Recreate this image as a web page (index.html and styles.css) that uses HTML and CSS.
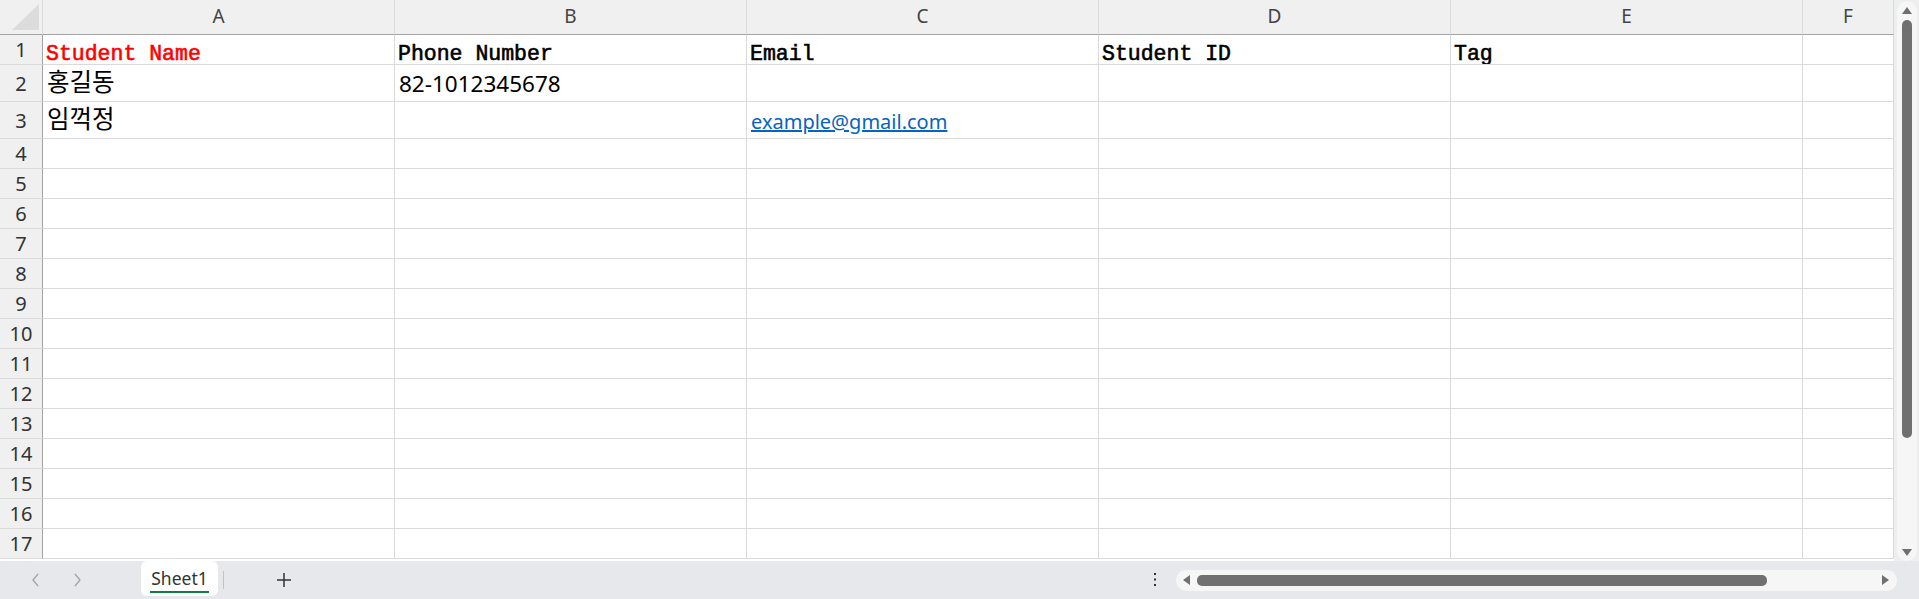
FILE: index.html
```html
<!DOCTYPE html>
<html lang="ko">
<head>
  <meta charset="UTF-8" />
  <title>Sheet1</title>
  <link rel="stylesheet" href="styles.css">
</head>
<body>
<div class="app">
  <div class="sheet">
    <div class="grid" id="grid">
      <div class="corner">
        <svg width="43" height="35" viewBox="0 0 43 35"><polygon points="12,30 39,4 39,30" fill="#dcdcdc"/></svg>
      </div>
      <div class="col-head">A</div>
      <div class="col-head">B</div>
      <div class="col-head">C</div>
      <div class="col-head">D</div>
      <div class="col-head">E</div>
      <div class="col-head">F</div>

      <div class="row-head">1</div>
      <div class="cell title red">Student Name</div>
      <div class="cell title">Phone Number</div>
      <div class="cell title">Email</div>
      <div class="cell title">Student ID</div>
      <div class="cell title">Tag</div>
      <div class="cell"></div>

      <div class="row-head">2</div>
      <div class="cell text ko">홍길동</div>
      <div class="cell text">82-1012345678</div>
      <div class="cell"></div>
      <div class="cell"></div>
      <div class="cell"></div>
      <div class="cell"></div>

      <div class="row-head">3</div>
      <div class="cell text ko">임꺽정</div>
      <div class="cell"></div>
      <div class="cell text"><a class="link" href="mailto:example@gmail.com">example@gmail.com</a></div>
      <div class="cell"></div>
      <div class="cell"></div>
      <div class="cell"></div>
    </div>

    <div class="vscroll">
      <div class="vtrack">
        <span class="arrow up"></span>
        <span class="vthumb"></span>
        <span class="arrow down"></span>
      </div>
    </div>
  </div>

  <div class="tabbar">
    <div class="nav">
      <svg width="10" height="14" viewBox="0 0 10 14"><path d="M7 1 L2 7 L7 13" fill="none" stroke="#a3a3a3" stroke-width="1.3"/></svg>
      <svg width="10" height="14" viewBox="0 0 10 14"><path d="M3 1 L8 7 L3 13" fill="none" stroke="#a3a3a3" stroke-width="1.3"/></svg>
    </div>
    <div class="tab"><span class="label">Sheet1</span></div>
    <span class="sep"></span>
    <svg class="add" width="14" height="14" viewBox="0 0 14 14"><path d="M7 0 V14 M0 7 H14" stroke="#333" stroke-width="1.5"/></svg>
    <div class="spacer"></div>
    <svg class="more" width="4" height="16" viewBox="0 0 4 16"><rect x="1" y="1" width="2" height="2" fill="#333"/><rect x="1" y="6.5" width="2" height="2" fill="#333"/><rect x="1" y="12" width="2" height="2" fill="#333"/></svg>
    <div class="htrack">
      <span class="arrow left"></span>
      <span class="hthumb"></span>
      <span class="arrow right"></span>
    </div>
  </div>
</div>

<script>
  // empty rows 4..17
  const grid = document.getElementById("grid");
  for (let r = 4; r <= 17; r++) {
    const head = document.createElement("div");
    head.className = "row-head";
    head.textContent = r;
    grid.appendChild(head);
    for (let c = 0; c < 6; c++) {
      const cell = document.createElement("div");
      cell.className = "cell";
      grid.appendChild(cell);
    }
  }
</script>
</body>
</html>
```

FILE: styles.css
```css
html, body {
  margin: 0;
  padding: 0;
  overflow: hidden;
}
body {
  font-family: "Noto Sans", "Noto Sans CJK KR", sans-serif;
  background: #e6e8eb;
}
.app {
  width: 1919px;
  height: 599px;
  display: flex;
  flex-direction: column;
}
.sheet {
  display: flex;
  height: 561px;
}
.grid {
  flex: 1;
  display: grid;
  grid-template-columns: 43px repeat(5, 352px) 1fr;
  grid-template-rows: 35px 30px 37px 37px repeat(14, 30px);
  background: #fff;
  overflow: hidden;
}
.grid > div {
  box-sizing: border-box;
  min-width: 0;
}
.corner {
  background: #f0f0f0;
  border-right: 1px solid #dadada;
  border-bottom: 1px solid #a3a3a3;
}
.corner svg {
  display: block;
}
.col-head {
  background: #f0f0f0;
  border-right: 1px solid #dadada;
  border-bottom: 1px solid #a3a3a3;
  color: #444;
  font-size: 19px;
  line-height: 1;
  display: flex;
  align-items: center;
  justify-content: center;
  padding-bottom: 2px;
}
.row-head {
  background: #f0f0f0;
  border-right: 1px solid #a3a3a3;
  border-bottom: 1px solid #dadada;
  color: #333;
  font-size: 20px;
  line-height: 1;
  display: flex;
  align-items: center;
  justify-content: center;
  padding-top: 1px;
}
.cell {
  border-right: 1px solid #dadada;
  border-bottom: 1px solid #dadada;
  padding: 0 4px;
  display: flex;
  align-items: flex-end;
  white-space: nowrap;
  overflow: hidden;
}
.title {
  font-family: "Liberation Mono", monospace;
  font-size: 21.5px;
  line-height: 20px;
  padding-left: 3px;
  color: #000;
  -webkit-text-stroke: 0.6px currentColor;
}
.red {
  color: #ff0000;
}
.text {
  font-size: 22.5px;
  line-height: 1;
  padding-bottom: 6px;
  color: #000;
}
.ko {
  font-size: 24.5px;
  padding-bottom: 7px;
}
.link {
  font-size: 20px;
  color: #0563c1;
  text-decoration: underline;
}

/* vertical scrollbar */
.vscroll {
  width: 25px;
  background: #eceef0;
  padding: 1px 2px 0 3px;
  box-sizing: border-box;
}
.vtrack {
  height: 560px;
  background: #f6f6f6;
  border-radius: 10px;
  display: flex;
  flex-direction: column;
  align-items: center;
  padding: 6px 0 5px;
  box-sizing: border-box;
}
.vthumb {
  width: 10px;
  height: 418px;
  margin-top: 6px;
  background: #707070;
  border-radius: 5px;
}
.arrow {
  width: 0;
  height: 0;
  border: 0 solid transparent;
}
.arrow.up {
  border-left-width: 5px;
  border-right-width: 5px;
  border-bottom: 7px solid #707070;
}
.arrow.down {
  margin-top: auto;
  border-left-width: 5px;
  border-right-width: 5px;
  border-top: 7px solid #707070;
}

/* sheet tabs and horizontal scrollbar */
.tabbar {
  height: 38px;
  display: flex;
  align-items: center;
  padding-right: 22px;
}
.nav {
  display: flex;
  gap: 31px;
  padding-left: 31px;
}
.nav svg {
  display: block;
}
.tab {
  align-self: flex-start;
  margin-left: 59px;
  width: 77px;
  height: 35px;
  background: #fff;
  border-radius: 6px;
  display: flex;
  justify-content: center;
  padding-top: 6px;
  box-sizing: border-box;
}
.label {
  font-size: 17.5px;
  line-height: 22px;
  color: #333;
  padding: 0 1px 2px;
  border-bottom: 2px solid #107c41;
  height: 22px;
}
.sep {
  width: 1px;
  height: 18px;
  margin-left: 5px;
  background: #c3c3c3;
}
.add {
  display: block;
  margin-left: 53px;
}
.spacer {
  flex: 1;
}
.more {
  display: block;
  margin-right: 19px;
}
.htrack {
  width: 721px;
  height: 21px;
  background: #f6f6f6;
  border-radius: 10px;
  display: flex;
  align-items: center;
  padding: 0 8px 0 7px;
  box-sizing: border-box;
}
.hthumb {
  width: 570px;
  height: 11px;
  margin-left: 7px;
  background: #707070;
  border-radius: 5px;
}
.arrow.left {
  border-top-width: 5px;
  border-bottom-width: 5px;
  border-right: 7px solid #707070;
}
.arrow.right {
  margin-left: auto;
  border-top-width: 5px;
  border-bottom-width: 5px;
  border-left: 7px solid #707070;
}
```
